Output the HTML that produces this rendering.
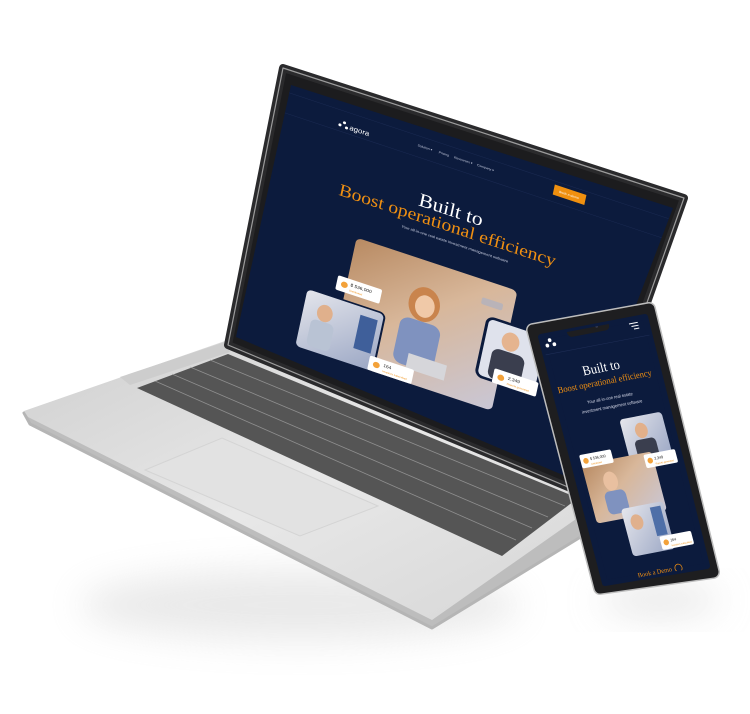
<!DOCTYPE html>
<html><head><meta charset="utf-8"><style>
html,body{margin:0;padding:0;background:#fff;}
svg{display:block;}
text{font-family:"Liberation Serif",serif;}
.s{font-family:"Liberation Sans",sans-serif;}
</style></head><body>
<svg width="750" height="714" viewBox="0 0 750 714" xmlns="http://www.w3.org/2000/svg">
<defs>
<filter id="blur" x="-50%" y="-50%" width="200%" height="200%"><feGaussianBlur stdDeviation="18"/></filter>
<linearGradient id="base" x1="0" y1="0" x2="1" y2="1">
<stop offset="0" stop-color="#cfcfcf"/><stop offset="0.5" stop-color="#e8e8e8"/><stop offset="1" stop-color="#d6d6d6"/></linearGradient>
<linearGradient id="photo" x1="0" y1="0" x2="1" y2="1">
<stop offset="0" stop-color="#b88a62"/><stop offset="0.45" stop-color="#d8b79a"/><stop offset="1" stop-color="#c9c7d6"/></linearGradient>
<linearGradient id="photo2" x1="0" y1="0" x2="1" y2="1">
<stop offset="0" stop-color="#e5e6ec"/><stop offset="1" stop-color="#9aa6c4"/></linearGradient>
<clipPath id="lscr"><polygon points="291,85 673,208 570,478 236,337"/></clipPath>
<clipPath id="pscr"><polygon points="541,337 645,317 707,566 605,583"/></clipPath>
</defs>

<!-- shadows -->
<ellipse cx="300" cy="605" rx="220" ry="35" fill="#cfcfcf" filter="url(#blur)" opacity="0.45"/>
<ellipse cx="660" cy="600" rx="60" ry="16" fill="#d0d0d0" filter="url(#blur)" opacity="0.5"/>

<!-- laptop base -->
<polygon points="225,343 580,490 592,530 432,628 30,424 24,413" fill="#bdbdbd" stroke="#b5b5b5" stroke-width="3" stroke-linejoin="round"/>
<polygon points="225,341 580,488 586,512 432,620 28,417 24,411" fill="url(#base)" stroke-linejoin="round"/>
<polygon points="120,377 225,342 230,352 130,385" fill="#cdcdcd"/>
<!-- keyboard -->
<polygon points="228,354 578,498 502,556 137,388" fill="#555"/>
<g stroke="#a8a8a8" stroke-width="0.8" opacity="0.7">
<line x1="210" y1="360" x2="565" y2="506"/>
<line x1="190" y1="367" x2="548" y2="517"/>
<line x1="172" y1="374" x2="532" y2="528"/>
<line x1="155" y1="381" x2="516" y2="540"/>
</g>
<!-- trackpad -->
<polygon points="145,470 222,438 378,506 300,536" fill="#e2e2e2" stroke="#d4d4d4" stroke-width="1"/>

<!-- lid -->
<polygon points="283,68 684,198 580,492 228,345" fill="#1c1c1e" stroke="#2a2a2c" stroke-width="8" stroke-linejoin="round"/>
<polygon points="283,68 684,198 580,492 228,345" fill="none" stroke="#9c9c9c" stroke-width="1.2" stroke-linejoin="round"/>
<polygon points="291,85 673,208 570,478 236,337" fill="#0c1b3d"/>

<g clip-path="url(#lscr)">
<g transform="matrix(0.9575,0.3175,-0.18,0.833,287,85)">
 <g stroke="#1b2a52" stroke-width="0.6">
  <line x1="0" y1="8" x2="400" y2="8"/>
  <line x1="0" y1="32" x2="400" y2="32"/>
 </g>
 <g fill="#fff">
  <circle cx="60" cy="25" r="1.6"/><circle cx="64" cy="21" r="1.6"/><circle cx="67" cy="26" r="1.6"/>
 </g>
 <text x="70" y="27" class="s" font-size="8" fill="#fff">agora</text>
 <text x="140" y="20" class="s" font-size="3.5" fill="#c8cde0">Solution ▾</text>
 <text x="162" y="20" class="s" font-size="3.5" fill="#c8cde0">Pricing</text>
 <text x="178" y="20" class="s" font-size="3.5" fill="#c8cde0">Resources ▾</text>
 <text x="202" y="20" class="s" font-size="3.5" fill="#c8cde0">Company ▾</text>
 <rect x="282" y="12" width="33" height="12" fill="#f0900f"/>
 <text x="298" y="19.5" class="s" font-size="3.5" fill="#fff" text-anchor="middle">Book a demo</text>
 <text x="186" y="86" font-size="22" fill="#fff" text-anchor="middle">Built to</text>
 <text x="186" y="104" font-size="20" fill="#ef8f12" text-anchor="middle">Boost operational efficiency</text>
 <text x="197" y="117" class="s" font-size="4.2" fill="#c8cde0" text-anchor="middle">Your all-in-one real estate investment management software</text>
 <rect x="100" y="145" width="168" height="144" rx="6" fill="url(#photo)"/>
 <ellipse cx="180" cy="195" rx="16" ry="20" fill="#c9844d"/>
 <rect x="160" y="215" width="42" height="55" rx="10" fill="#7f92bf"/>
 <ellipse cx="181" cy="197" rx="10" ry="13" fill="#f0c9a8"/>
 <rect x="175" y="255" width="40" height="18" fill="#d6d6da"/>
 <rect x="235" y="165" width="22" height="8" rx="2" fill="#b9b3b8"/>
 <rect x="62" y="220" width="82" height="70" rx="6" fill="url(#photo2)" stroke="#0c1b3d" stroke-width="2"/>
 <ellipse cx="85" cy="242" rx="8" ry="10" fill="#e0b08c"/>
 <rect x="73" y="252" width="24" height="32" rx="6" fill="#b9c3d4"/>
 <rect x="120" y="230" width="18" height="40" fill="#3f5f9a"/>
 <rect x="245" y="185" width="62" height="70" rx="7" fill="#dfe2ec" stroke="#0c1b3d" stroke-width="3"/>
 <ellipse cx="272" cy="205" rx="9" ry="11" fill="#e5b48f"/>
 <rect x="256" y="217" width="34" height="36" rx="8" fill="#3a3e4e"/>
 <rect x="90" y="194" width="46" height="17" rx="2" fill="#fff"/>
 <circle cx="98" cy="202.5" r="3.5" fill="#f3a23a"/>
 <text x="104" y="202" class="s" font-size="5" fill="#222">$ 536,000</text>
 <text x="104" y="208" class="s" font-size="2.8" fill="#ef8f12">Distributed</text>
 <rect x="138" y="272" width="46" height="17" rx="2" fill="#fff"/>
 <circle cx="146" cy="280.5" r="3.5" fill="#f3a23a"/>
 <text x="153" y="280" class="s" font-size="5" fill="#222">164</text>
 <text x="153" y="286" class="s" font-size="2.8" fill="#ef8f12">Investors subscribed</text>
 <rect x="262" y="240" width="46" height="17" rx="2" fill="#fff"/>
 <circle cx="270" cy="248.5" r="3.5" fill="#f3a23a"/>
 <text x="277" y="248" class="s" font-size="5" fill="#222">2,349</text>
 <text x="277" y="254" class="s" font-size="2.8" fill="#ef8f12">Reports generated</text>
</g>
</g>

<!-- phone -->
<polygon points="533,330 649,309 713,572 600,588" fill="#bdbdbd" stroke="#bdbdbd" stroke-width="14" stroke-linejoin="round"/>
<polygon points="533,330 649,309 713,572 600,588" fill="#1e1e20" stroke="#1e1e20" stroke-width="11" stroke-linejoin="round"/>
<polygon points="541,337 645,317 707,566 605,583" fill="#0c1b3d" stroke="#0c1b3d" stroke-width="6" stroke-linejoin="round"/>
<g clip-path="url(#pscr)">
<g transform="matrix(0.875,-0.167,0.25,0.95,540,335)">
 <rect x="30" y="-4" width="48" height="12" rx="5" fill="#1e1e20"/>
 <circle cx="64" cy="2" r="1.5" fill="#3a3f55"/>
 <g stroke="#fff" stroke-width="1"><line x1="100" y1="6" x2="110" y2="6"/><line x1="102" y1="9" x2="110" y2="9"/><line x1="104" y1="12" x2="110" y2="12"/></g>
 <g fill="#fff"><circle cx="5" cy="12" r="2"/><circle cx="9" cy="7" r="2"/><circle cx="13" cy="12" r="2"/></g>
 <line x1="0" y1="21" x2="130" y2="21" stroke="#1e2d55" stroke-width="0.6"/>
 <text x="57" y="49" font-size="14" fill="#fff" text-anchor="middle">Built to</text>
 <text x="57" y="62" font-size="9.5" fill="#ef8f12" text-anchor="middle">Boost operational efficiency</text>
 <text x="58" y="78" class="s" font-size="4.6" fill="#d0d4e4" text-anchor="middle">Your all-in-one real estate</text>
 <text x="58" y="87" class="s" font-size="4.6" fill="#d0d4e4" text-anchor="middle">investment management software</text>
 <rect x="62" y="100" width="48" height="48" rx="4" fill="url(#photo2)"/>
 <ellipse cx="83" cy="115" rx="7" ry="8" fill="#e2b08a"/>
 <rect x="72" y="124" width="24" height="20" rx="5" fill="#3a3e4e"/>
 <rect x="8" y="138" width="80" height="62" rx="4" fill="url(#photo)"/>
 <ellipse cx="35" cy="160" rx="8" ry="10" fill="#e9c0a0"/>
 <rect x="24" y="170" width="24" height="24" rx="6" fill="#7f92bf"/>
 <rect x="38" y="190" width="48" height="50" rx="4" fill="url(#photo2)"/>
 <ellipse cx="52" cy="206" rx="7" ry="8" fill="#e0b08c"/>
 <rect x="70" y="194" width="12" height="30" fill="#4e6fa8"/>
 <rect x="8" y="128" width="36" height="14" rx="2" fill="#fff"/>
 <circle cx="14" cy="135" r="3" fill="#f3a23a"/>
 <text x="19" y="135" class="s" font-size="4" fill="#222">$ 536,000</text>
 <text x="19" y="140" class="s" font-size="2.5" fill="#ef8f12">Distributed</text>
 <rect x="78" y="140" width="36" height="14" rx="2" fill="#fff"/>
 <circle cx="84" cy="147" r="3" fill="#f3a23a"/>
 <text x="89" y="147" class="s" font-size="4" fill="#222">2,349</text>
 <text x="89" y="152" class="s" font-size="2.5" fill="#ef8f12">Reports generated</text>
 <rect x="72" y="225" width="36" height="14" rx="2" fill="#fff"/>
 <circle cx="78" cy="232" r="3" fill="#f3a23a"/>
 <text x="83" y="232" class="s" font-size="4" fill="#222">164</text>
 <text x="83" y="237" class="s" font-size="2.5" fill="#ef8f12">Investors subscribed</text>
 <text x="57" y="262" font-size="7" fill="#ef8f12" text-anchor="middle">Book a Demo</text>
 <circle cx="84" cy="260" r="4" fill="none" stroke="#ef8f12" stroke-width="0.8"/>
 <path d="M10 278 Q60 268 115 272 L115 290 L10 290Z" fill="#c47d1a" opacity="0.5"/>
</g>
</g>
</svg>
</body></html>
